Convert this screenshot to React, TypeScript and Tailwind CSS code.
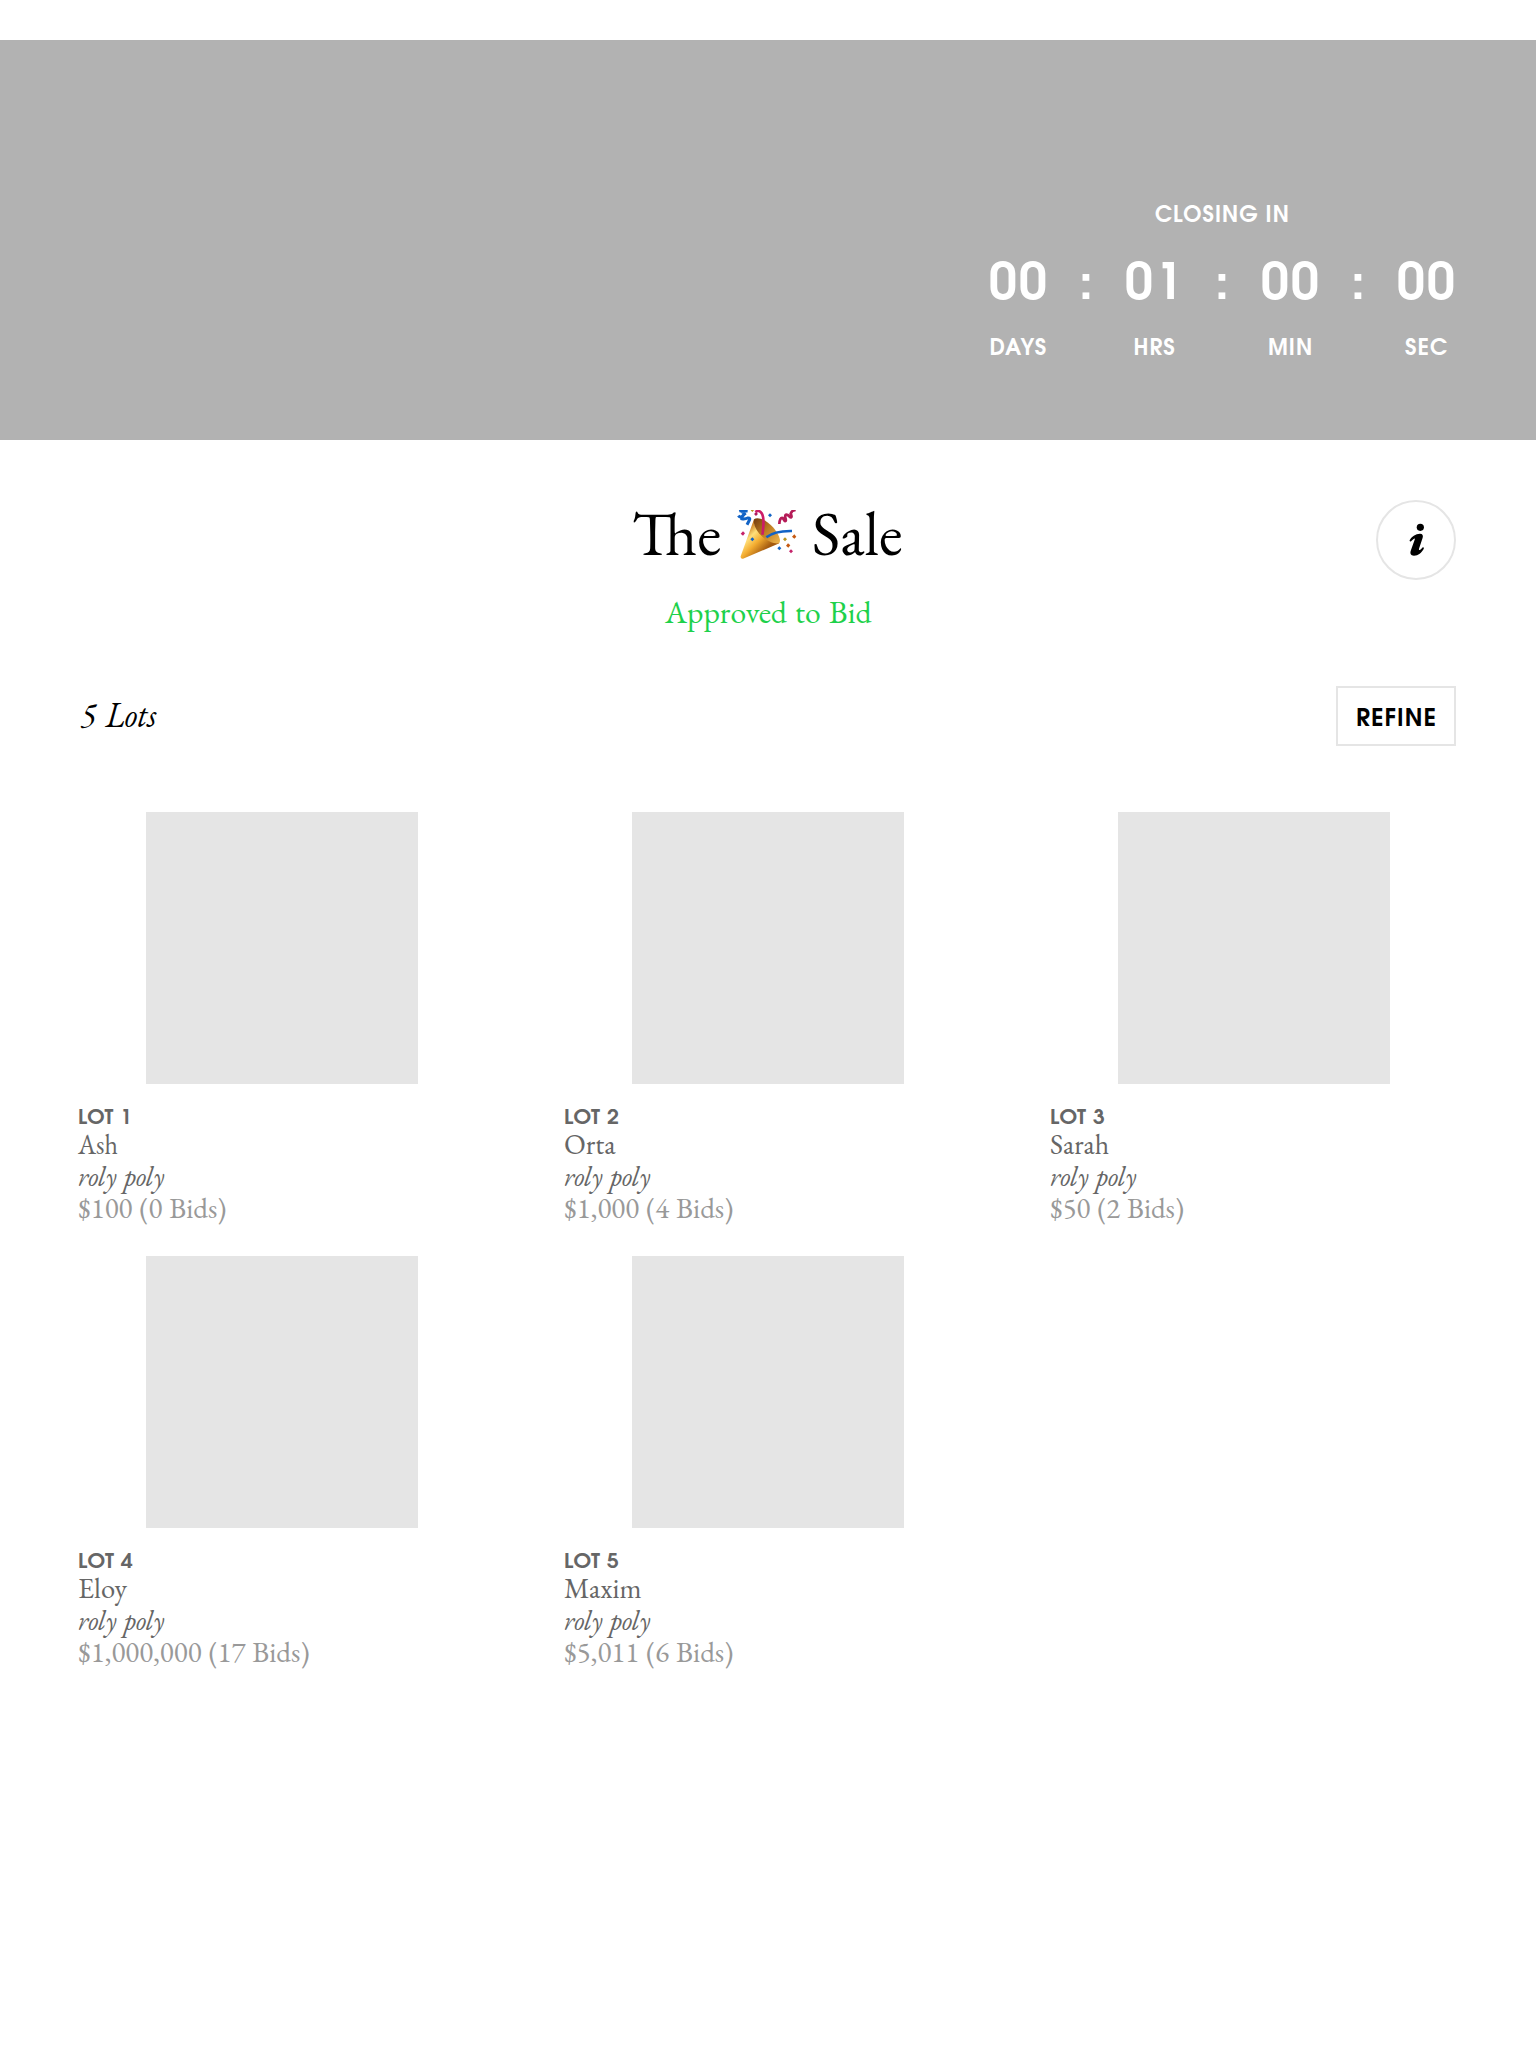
import { useLayoutEffect, useRef, useState } from "react";

const SERIF = "font-['EB_Garamond','Liberation_Serif',serif]";
const SANS = "font-['TeX_Gyre_Adventor','Lato',sans-serif]";

/** One line of text condensed or widened to an exact width. */
function Fit({ w, children, className = "" }: { w: number; children: string; className?: string }) {
  const ref = useRef<HTMLSpanElement>(null);
  const [scale, setScale] = useState(1);
  useLayoutEffect(() => {
    if (ref.current) setScale(w / ref.current.offsetWidth);
  }, [w, children]);
  return (
    <span className={`flex shrink-0 ${className}`} style={{ width: w }}>
      <span
        ref={ref}
        className="block shrink-0 origin-left whitespace-pre"
        style={{ transform: `scaleX(${scale})` }}
      >
        {children}
      </span>
    </span>
  );
}

function PartyPopper() {
  return (
    <svg className="block h-[50px] w-[60px]" viewBox="50 60 180 150" fill="none">
      <defs>
        <linearGradient id="cone" x1="75" y1="120" x2="135" y2="180" gradientUnits="userSpaceOnUse">
          <stop offset="0" stopColor="#c9781a" />
          <stop offset="0.3" stopColor="#ffdf7a" />
          <stop offset="0.6" stopColor="#f3ac30" />
          <stop offset="1" stopColor="#a35a10" />
        </linearGradient>
        <linearGradient id="mouth" x1="105" y1="90" x2="175" y2="155" gradientUnits="userSpaceOnUse">
          <stop offset="0" stopColor="#7c4310" />
          <stop offset="0.5" stopColor="#c08024" />
          <stop offset="1" stopColor="#e9b04a" />
        </linearGradient>
      </defs>
      <path d="M101 88 C97 110 125 145 177 160 L68 206 Q60 207 61 199 Z" fill="url(#cone)" />
      <path d="M101 88 C112 78 140 91 158 112 C175 132 184 153 176 160 C160 163 132 150 116 130 C103 113 98 96 101 88Z" fill="url(#mouth)" />
      <path d="M105 66 Q116 58 124 70 Q133 84 127 128 L126 134" stroke="#cc1d68" strokeWidth="8" />
      <path d="M104 75 L110 69" stroke="#b01b5c" strokeWidth="8" />
      <path d="M138 142 Q162 122 215 123" stroke="#1263c6" strokeWidth="8" />
      <path d="M54 77 Q60 85 68 77 Q77 69 66 66 Q60 64 60 60 M57 62 Q72 62 82 63 M76 69 Q63 80 64 86 Q74 88 82 84 Q91 83 87 91 L80 104" stroke="#1263c6" strokeWidth="9" />
      <path d="M177 102 Q178 82 187 84 L193 93 Q199 95 195 83 Q193 71 202 75 L210 82 Q217 84 211 71 Q214 61 226 60" stroke="#b51c58" strokeWidth="8" />
      <path d="M149 70l6 6-6 6-6-6zM96 142l6 6-6 6-6-6zM177 169l6 6-6 6-6-6z" fill="#1263c6" />
      <path d="M68 124l6 6-6 7-7-6zM212 178l6 6-6 6-6-6z" fill="#c5236a" />
      <path d="M222 133l6 7-6 6-7-6zM203 160l7 6-6 7-7-6z" fill="#c65a12" />
      <path d="M194 142l6 6-6 6-6-6zM96 58l5 3-5 5-5-5z" fill="#b99420" />
    </svg>
  );
}

function InfoGlyph() {
  return (
    <svg className="ml-[2px] block h-[34px] w-[16px]" viewBox="268 130 48 102">
      <circle cx="302" cy="143" r="10.8" />
      <path d="M270 182 C275 171 288 162 301 162 C309 162 311 167 309 174 L298 207 C297 213 301 212 308 204 C311 201 314 204 312 208 C306 219 296 228 283 228 C273 228 270 221 274 211 L285 180 C287 174 283 175 275 184 C272 187 269 185 270 182Z" />
    </svg>
  );
}

const units = [
  { value: "00", label: "DAYS", w: 58 },
  { value: "01", label: "HRS", w: 42 },
  { value: "00", label: "MIN", w: 45 },
  { value: "00", label: "SEC", w: 43 },
];

const lots = [
  { lot: "LOT 1", lw: 54, artist: "Ash", aw: 40, bids: "$100 (0 Bids)", bw: 148 },
  { lot: "LOT 2", lw: 55, artist: "Orta", aw: 52, bids: "$1,000 (4 Bids)", bw: 169 },
  { lot: "LOT 3", lw: 55, artist: "Sarah", aw: 59, bids: "$50 (2 Bids)", bw: 134 },
  { lot: "LOT 4", lw: 55, artist: "Eloy", aw: 49, bids: "$1,000,000 (17 Bids)", bw: 232 },
  { lot: "LOT 5", lw: 55, artist: "Maxim", aw: 78, bids: "$5,011 (6 Bids)", bw: 169 },
];

export default function App() {
  return (
    <div className={`h-[2048px] w-[1536px] overflow-hidden bg-white pt-10 text-black ${SERIF}`}>
      <header className={`flex h-[400px] justify-end bg-[#b2b2b2] pt-[162px] pr-[81px] font-bold text-white ${SANS}`}>
        <div className="flex w-[464px] flex-col items-center">
          <Fit w={135} className="mr-0.5 text-[22px] leading-7 tracking-[1px]">CLOSING IN</Fit>
          <div className="mt-[25px] flex">
            {units.map((u, i) => (
              <div key={u.label} className="flex">
                {i > 0 && <span className="w-20 pr-0.5 text-center text-[50px] leading-[60px]">:</span>}
                <div className="flex w-14 flex-col items-center">
                  <Fit w={60} className="text-[50px] leading-[60px] tracking-[2px]">{u.value}</Fit>
                  <Fit w={u.w} className="mt-5 mr-px text-[22px] leading-7 tracking-[1px]">{u.label}</Fit>
                </div>
              </div>
            ))}
          </div>
        </div>
      </header>

      <section className="grid grid-cols-[1fr_auto_1fr] px-20 pt-[60px]">
        <div />
        <div className="flex flex-col items-center">
          <h1 className="mr-px flex h-[84px] text-[62px] leading-[66px] [font-feature-settings:'liga','dlig']">
            <Fit w={89}>The</Fit>
            <span className="mt-[10px] mr-[15px] ml-4" role="img" aria-label="party popper">
              <PartyPopper />
            </span>
            <Fit w={91}>Sale</Fit>
          </h1>
          <Fit w={206} className="mt-2 mr-px text-[32px] leading-10 text-[#1ed14b] [word-spacing:2px]">Approved to Bid</Fit>
        </div>
        <button className="flex size-20 items-center justify-center justify-self-end rounded-full border-2 border-[#e5e5e5]">
          <InfoGlyph />
        </button>
      </section>

      <section className="mt-[54px] flex items-center justify-between px-20">
        <Fit w={76} className="mb-0.5 text-[35px] leading-[56px] italic [word-spacing:3px]">5 Lots</Fit>
        <button className={`flex h-[60px] w-[120px] items-center justify-center border-2 border-[#e5e5e5] pt-[5px] pl-px text-2xl font-bold ${SANS}`}>
          <Fit w={81} className="tracking-[1px]">REFINE</Fit>
        </button>
      </section>

      <main className="mt-[66px] grid grid-cols-[408px_408px_408px] gap-x-[78px] gap-y-8 pl-[78px]">
        {lots.map((l) => (
          <article key={l.lot} className="text-[28px] leading-8 text-[#666666]">
            <div className="mx-auto size-[272px] bg-[#e5e5e5]" />
            <Fit w={l.lw} className={`mt-[25px] text-xl leading-[19px] font-bold tracking-[0.5px] ${SANS}`}>{l.lot}</Fit>
            <Fit w={l.aw}>{l.artist}</Fit>
            <Fit w={86} className="italic [word-spacing:2px]">roly poly</Fit>
            <Fit w={l.bw} className="text-[#999999] [word-spacing:1px]">{l.bids}</Fit>
          </article>
        ))}
      </main>
    </div>
  );
}
